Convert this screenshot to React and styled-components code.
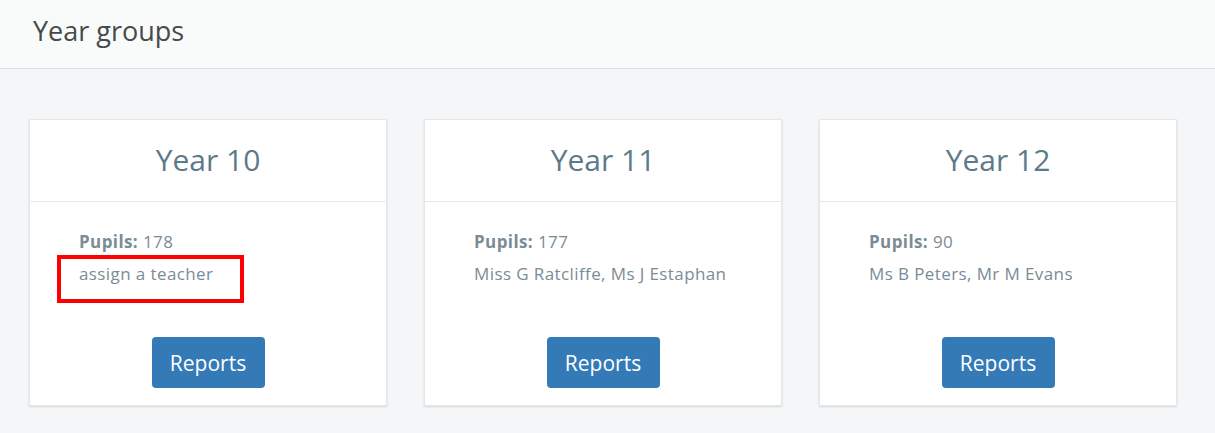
import React from "react";
import styled, { createGlobalStyle } from "styled-components";

const Global = createGlobalStyle`
  html, body { margin: 0; padding: 0; }
  body {
    background: #f5f6f8;
    font-family: "Open Sans", "Noto Sans", sans-serif;
    width: 1215px;
    height: 433px;
    overflow: hidden;
  }
`;

const Page = styled.div`
  display: flex;
  flex-direction: column;
`;

const TopBar = styled.header`
  height: 68px;
  background: #f9fafa;
  border-bottom: 1px solid #dcdfe2;
  display: flex;
  align-items: center;
  padding-left: 33px;
  box-sizing: content-box;
`;

const PageTitle = styled.h1`
  margin: 0;
  font-size: 27px;
  font-weight: 400;
  color: #464a4e;
  margin-top: -7px;
`;

const Grid = styled.main`
  display: grid;
  grid-template-columns: repeat(3, 358px);
  column-gap: 37px;
  padding: 50px 0 0 29px;
`;

const Card = styled.section`
  background: #fff;
  border: 1px solid #e4e6e8;
  box-shadow: 0 1px 2px rgba(0, 0, 0, 0.12);
  display: flex;
  flex-direction: column;
`;

const CardHeader = styled.div`
  height: 81px;
  border-bottom: 1px solid #e6e8ea;
  display: flex;
  align-items: center;
  justify-content: center;
`;

const CardTitle = styled.h2`
  margin: 0;
  margin-top: -2px;
  font-size: 30px;
  font-weight: 400;
  color: #5d7a8a;
`;

const CardBody = styled.div`
  padding: 24px 49px 17px 49px;
  display: flex;
  flex-direction: column;
`;

const Line = styled.div`
  position: relative;
  font-size: 17px;
  letter-spacing: 0.4px;
  line-height: 32px;
  color: #7b8c96;
  white-space: nowrap;
`;

const Label = styled.strong`
  font-weight: 700;
`;

const Highlight = styled.span`
  position: absolute;
  left: -22px;
  top: -3px;
  width: 187px;
  height: 48px;
  border: 4px solid #ff0000;
  box-sizing: border-box;
  pointer-events: none;
`;

const ButtonRow = styled.div`
  display: flex;
  justify-content: center;
  margin-top: 47px;
`;

const ReportsButton = styled.button`
  height: 51px;
  width: 113px;
  border: none;
  border-radius: 4px;
  background: #337ab7;
  color: #fff;
  font-family: "Open Sans", "Noto Sans", sans-serif;
  font-size: 21px;
  cursor: pointer;
  padding: 0;
`;

const groups = [
  { name: "Year 10", pupils: 178, teachers: "assign a teacher", flagged: true },
  { name: "Year 11", pupils: 177, teachers: "Miss G Ratcliffe, Ms J Estaphan" },
  { name: "Year 12", pupils: 90, teachers: "Ms B Peters, Mr M Evans" },
];

export default function App() {
  return (
    <>
      <Global />
      <Page>
        <TopBar>
          <PageTitle>Year groups</PageTitle>
        </TopBar>
        <Grid>
          {groups.map((g) => (
            <Card key={g.name}>
              <CardHeader>
                <CardTitle>{g.name}</CardTitle>
              </CardHeader>
              <CardBody>
                <Line>
                  <Label>Pupils:</Label> {g.pupils}
                </Line>
                <Line>
                  {g.teachers}
                  {g.flagged && <Highlight />}
                </Line>
                <ButtonRow>
                  <ReportsButton>Reports</ReportsButton>
                </ButtonRow>
              </CardBody>
            </Card>
          ))}
        </Grid>
      </Page>
    </>
  );
}
